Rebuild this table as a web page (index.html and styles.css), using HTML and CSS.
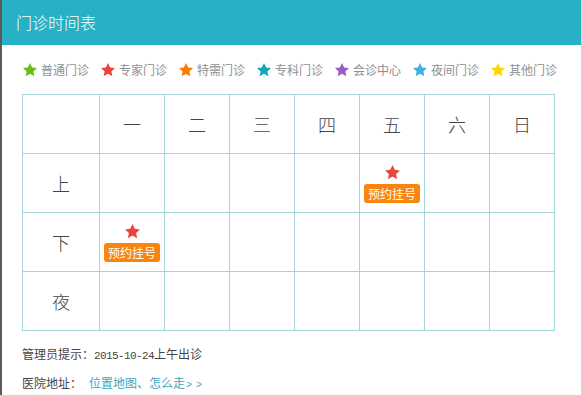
FILE: index.html
```html
<!DOCTYPE html>
<html lang="zh-CN">
<head>
<meta charset="utf-8">
<title>门诊时间表</title>
<link rel="stylesheet" href="styles.css">
</head>
<body>
<svg width="0" height="0" class="defs">
  <defs>
    <symbol id="star" viewBox="0 0 24 24">
      <polygon points="12,1.5 15.2,8.2 22.5,9.1 17.1,14.1 18.5,21.5 12,17.8 5.5,21.5 6.9,14.1 1.5,9.1 8.8,8.2"/>
    </symbol>
  </defs>
</svg>
<div class="page">
  <div class="header">门诊时间表</div>
  <div class="content">
    <ul class="legend">
      <li><svg class="star c-green"><use href="#star"/></svg>普通门诊</li>
      <li><svg class="star c-red"><use href="#star"/></svg>专家门诊</li>
      <li><svg class="star c-orange"><use href="#star"/></svg>特需门诊</li>
      <li><svg class="star c-teal"><use href="#star"/></svg>专科门诊</li>
      <li><svg class="star c-purple"><use href="#star"/></svg>会诊中心</li>
      <li><svg class="star c-blue"><use href="#star"/></svg>夜间门诊</li>
      <li><svg class="star c-yellow"><use href="#star"/></svg>其他门诊</li>
    </ul>
    <div class="grid">
      <div class="cell"></div>
      <div class="cell head">一</div>
      <div class="cell head">二</div>
      <div class="cell head">三</div>
      <div class="cell head">四</div>
      <div class="cell head">五</div>
      <div class="cell head">六</div>
      <div class="cell head">日</div>

      <div class="cell head">上</div>
      <div class="cell"></div>
      <div class="cell"></div>
      <div class="cell"></div>
      <div class="cell"></div>
      <div class="cell slot"><svg class="slot-star c-red"><use href="#star"/></svg><a class="book">预约挂号</a></div>
      <div class="cell"></div>
      <div class="cell"></div>

      <div class="cell head">下</div>
      <div class="cell slot"><svg class="slot-star c-red"><use href="#star"/></svg><a class="book">预约挂号</a></div>
      <div class="cell"></div>
      <div class="cell"></div>
      <div class="cell"></div>
      <div class="cell"></div>
      <div class="cell"></div>
      <div class="cell"></div>

      <div class="cell head">夜</div>
      <div class="cell"></div>
      <div class="cell"></div>
      <div class="cell"></div>
      <div class="cell"></div>
      <div class="cell"></div>
      <div class="cell"></div>
      <div class="cell"></div>
    </div>
    <p class="note">管理员提示：<span class="mono">2015-10-24</span>上午出诊</p>
    <p class="note addr">医院地址：<a class="link">位置地图、怎么走<span class="arrows">&gt; &gt;</span></a></p>
  </div>
</div>
</body>
</html>
```
FILE: styles.css
```css
html, body {
  margin: 0;
  padding: 0;
  background: #fff;
}
body {
  font-family: "Noto Sans CJK SC", "Noto Sans", sans-serif;
  color: #555;
}
.defs {
  position: absolute;
  width: 0;
  height: 0;
}
.page {
  border-left: 2px solid #5a5a5a;
  height: 395px;
  box-sizing: border-box;
}
.header {
  height: 45px;
  background: #27b1c4;
  color: #fff;
  font-size: 16px;
  font-weight: 300;
  line-height: 45px;
  padding-left: 14px;
  box-sizing: border-box;
}
.content {
  padding-left: 20px;
}
.legend {
  list-style: none;
  margin: 0;
  padding: 15px 0 0 0;
  height: 34px;
  box-sizing: border-box;
  display: flex;
  align-items: center;
}
.legend li {
  display: flex;
  align-items: center;
  width: 78px;
  font-size: 12px;
  color: #909090;
  line-height: 16px;
}
.star {
  width: 16px;
  height: 16px;
  margin-right: 3px;
}
.c-green { fill: #6bbb1d; }
.c-red { fill: #e8463c; }
.c-orange { fill: #ff7800; }
.c-teal { fill: #12a8b9; }
.c-purple { fill: #9a5ebf; }
.c-blue { fill: #40b2de; }
.c-yellow { fill: #ffd400; }

.grid {
  margin-top: 15px;
  display: grid;
  grid-template-columns: 76px repeat(7, 64px);
  grid-auto-rows: 58px;
  gap: 1px;
  padding: 1px;
  width: 533px;
  box-sizing: border-box;
  background: #a3d5db;
}
.cell {
  background: #fff;
  display: flex;
  align-items: center;
  justify-content: center;
}
.head {
  font-size: 18px;
  font-weight: 300;
  color: #444;
}
.slot {
  flex-direction: column;
  gap: 3px;
}
.slot-star {
  width: 17px;
  height: 17px;
}
.book {
  display: block;
  background: #f7850e;
  color: #fff;
  font-size: 12px;
  line-height: 19px;
  height: 19px;
  padding: 0 4px;
  border-radius: 3px;
}
.note {
  margin: 0;
  font-size: 12px;
  color: #444;
  line-height: 16px;
}
.note:first-of-type {
  margin-top: 15px;
}
.addr {
  margin-top: 11px;
}
.mono {
  font-family: "Liberation Mono", monospace;
  font-size: 11px;
  letter-spacing: -0.6px;
}
.arrows {
  font-family: "Liberation Mono", monospace;
  font-size: 10px;
  letter-spacing: -1px;
  margin-left: 1px;
}
.link {
  color: #3aa8be;
  margin-left: 7px;
}
```
